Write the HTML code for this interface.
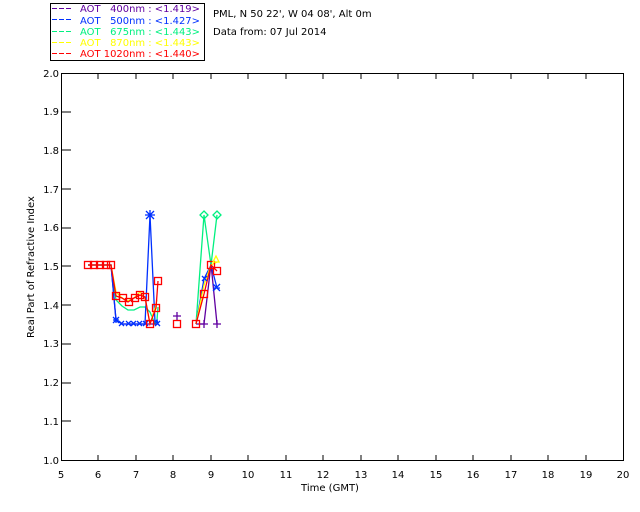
<!DOCTYPE html>
<html><head><style>
html,body{margin:0;padding:0;background:#fff;}
svg{display:block;font-family:"DejaVu Sans","Liberation Sans",sans-serif;font-size:10px;}
text{white-space:pre;}
</style></head><body>
<svg width="640" height="512" viewBox="0 0 640 512" xmlns="http://www.w3.org/2000/svg" xml:space="preserve">
<rect x="0" y="0" width="640" height="512" fill="#fff"/>
<rect x="50.5" y="3.5" width="154" height="57" fill="none" stroke="#000"/>
<g stroke-width="1" stroke-dasharray="5,2">
<line x1="52" y1="8.5" x2="73" y2="8.5" stroke="#6000a0"/>
<line x1="52" y1="19.5" x2="73" y2="19.5" stroke="#0030ff"/>
<line x1="52" y1="31.5" x2="73" y2="31.5" stroke="#00f080"/>
<line x1="52" y1="42.5" x2="73" y2="42.5" stroke="#ffff00"/>
<line x1="52" y1="53.5" x2="73" y2="53.5" stroke="#ff0000"/>
</g>
<g font-size="10">
<text x="80" y="12" fill="#6000a0" textLength="120" lengthAdjust="spacingAndGlyphs">AOT   400nm : &lt;1.419&gt;</text>
<text x="80" y="24" fill="#0030ff" textLength="120" lengthAdjust="spacingAndGlyphs">AOT   500nm : &lt;1.427&gt;</text>
<text x="80" y="35" fill="#00f080" textLength="120" lengthAdjust="spacingAndGlyphs">AOT   675nm : &lt;1.443&gt;</text>
<text x="80" y="46" fill="#ffff00" textLength="120" lengthAdjust="spacingAndGlyphs">AOT   870nm : &lt;1.443&gt;</text>
<text x="80" y="57" fill="#ff0000" textLength="120" lengthAdjust="spacingAndGlyphs">AOT 1020nm : &lt;1.440&gt;</text>
</g>
<text x="213" y="17" font-size="10">PML, N 50 22', W 04 08', Alt 0m</text>
<text x="213" y="35" font-size="10">Data from: 07 Jul 2014</text>
<rect x="61.5" y="73.5" width="562" height="387" fill="none" stroke="#000"/>
<g stroke="#000">
<path d="M98 461v-6M136 461v-6M173 461v-6M211 461v-6M248 461v-6M286 461v-6M323 461v-6M361 461v-6M398 461v-6M436 461v-6M473 461v-6M511 461v-6M548 461v-6M586 461v-6"/>
<path d="M98 73v6M136 73v6M173 73v6M211 73v6M248 73v6M286 73v6M323 73v6M361 73v6M398 73v6M436 73v6M473 73v6M511 73v6M548 73v6M586 73v6"/>
<path d="M61 112h10M61 150h10M61 189h10M61 228h10M61 266h10M61 305h10M61 344h10M61 383h10M61 421h10"/>
</g>
<g font-size="10" text-anchor="middle">
<text x="61" y="478">5</text><text x="98" y="478">6</text><text x="136" y="478">7</text><text x="173" y="478">8</text><text x="211" y="478">9</text><text x="248" y="478">10</text><text x="286" y="478">11</text><text x="323" y="478">12</text><text x="361" y="478">13</text><text x="398" y="478">14</text><text x="436" y="478">15</text><text x="473" y="478">16</text><text x="511" y="478">17</text><text x="548" y="478">18</text><text x="586" y="478">19</text><text x="623" y="478">20</text>
<text x="330" y="491">Time (GMT)</text>
</g>
<g font-size="10" text-anchor="end">
<text x="59" y="77">2.0</text><text x="59" y="115">1.9</text><text x="59" y="154">1.8</text><text x="59" y="193">1.7</text><text x="59" y="231">1.6</text><text x="59" y="270">1.5</text><text x="59" y="309">1.4</text><text x="59" y="347">1.3</text><text x="59" y="386">1.2</text><text x="59" y="425">1.1</text><text x="59" y="464">1.0</text>
</g>
<text transform="translate(34,267) rotate(-90)" font-size="10" text-anchor="middle">Real Part of Refractive Index</text>
<g fill="none" stroke-width="1.3">
<polyline stroke="#00f080" points="88,265 111,265 116,300 122,306 128,310 134,310 140,307 145,307 150,312 155,324 157,320 158,307"/>
<polyline stroke="#00f080" points="196,324 204,215 211,265 217,215"/>
<polyline stroke="#6000a0" points="88,265 111,265 116,320 122,324 150,324 158,324"/>
<polyline stroke="#6000a0" points="196,324 204,324 211,264 217,324"/>
<polyline stroke="#0030ff" points="88,265 111,265 116,320 122,324 145,324 150,215 155,322 157,320 158,324"/>
<polyline stroke="#0030ff" points="196,324 204,279 211,265 217,288"/>
<polyline stroke="#ffff00" points="88,265 111,265 116,292 122,298 128,301 134,298 140,292 145,298 150,324 155,308 157,300"/>
<polyline stroke="#ffff00" points="196,324 204,285 211,265 217,262"/>
<polyline stroke="#ff0000" points="88,265 111,265 116,296 122,298 128,302 134,298 140,295 145,297 150,324 156,308 158,281"/>
<polyline stroke="#ff0000" points="196,324 204,294 211,265 217,271"/>
</g>
<g fill="none" stroke="#0030ff" stroke-width="1.3">
<path d="M146 211l8 8M154 211l-8 8M150 210v10M145 215h10"/>
<path d="M113 317l6 6M119 317l-6 6M113 320h6M116 317v6 M119 321l5 5M124 321l-5 5M126 321l5 5M131 321l-5 5M131 321l5 5M136 321l-5 5M137 321l5 5M142 321l-5 5M143 321l5 5M148 321l-5 5M155 321l5 5M160 321l-5 5M213 284l7 7M220 284l-7 7M213 288h7M202 276l5 5M207 276l-5 5"/>
</g>
<g fill="none" stroke="#ff0000" stroke-width="1.3">
<rect x="84.5" y="261.5" width="7" height="7"/><rect x="90.5" y="261.5" width="7" height="7"/><rect x="96.5" y="261.5" width="7" height="7"/><rect x="102.5" y="261.5" width="7" height="7"/><rect x="107.5" y="261.5" width="7" height="7"/>
<rect x="112.5" y="292.5" width="7" height="7"/><rect x="119.5" y="294.5" width="7" height="7"/><rect x="125.5" y="298.5" width="7" height="7"/><rect x="131.5" y="294.5" width="7" height="7"/><rect x="136.5" y="291.5" width="7" height="7"/><rect x="141.5" y="293.5" width="7" height="7"/><rect x="146.5" y="320.5" width="7" height="7"/><rect x="152.5" y="304.5" width="7" height="7"/><rect x="154.5" y="277.5" width="7" height="7"/>
<rect x="173.5" y="320.5" width="7" height="7"/><rect x="192.5" y="320.5" width="7" height="7"/><rect x="200.5" y="290.5" width="7" height="7"/><rect x="207.5" y="261.5" width="7" height="7"/><rect x="213.5" y="267.5" width="7" height="7"/>
</g>
<g stroke="#00f080" fill="none" stroke-width="1.3">
<path d="M204 211l4 4-4 4-4-4z M217 211l4 4-4 4-4-4z"/>
</g>
<g stroke="#6000a0" stroke-width="1.3">
<path d="M177 312v8M173 316h8M204 320v8M200 324h8M217 320v8M213 324h8"/>
</g>
<path d="M216 256l3 6h-6z" fill="none" stroke="#ffff00" stroke-width="1.3"/>
</svg>
</body></html>
